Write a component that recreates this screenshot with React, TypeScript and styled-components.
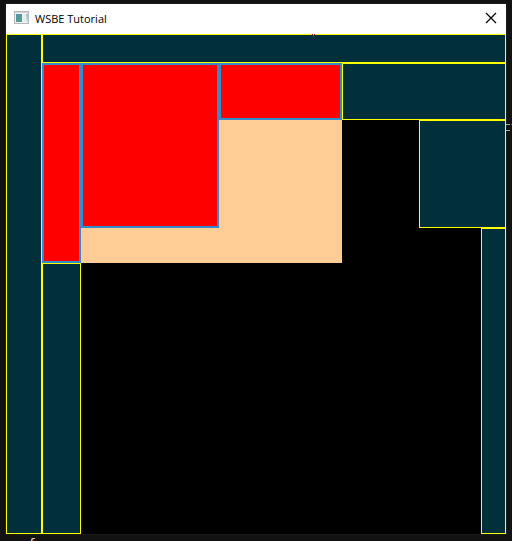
import React from "react";
import styled, { createGlobalStyle } from "styled-components";

const GlobalStyle = createGlobalStyle`
  * { box-sizing: border-box; }
  html, body { margin: 0; background: #121212; }
  body { overflow: hidden; }
`;

const Desktop = styled.div`
  position: relative;
  padding: 4px 6px 0;
  background: #121212;
  font-family: "Open Sans", "Noto Sans", sans-serif;
`;

const Window = styled.main`
  background: #000000;
  box-shadow: 0 0 0 1px #1c1c1c;
`;

const TitleBar = styled.header`
  display: flex;
  align-items: center;
  height: 30px;
  padding: 0 9px 2px 8px;
  background: #ffffff;
  color: #000000;
`;

const Title = styled.h1`
  flex: 1;
  margin: 0 0 0 6px;
  padding-top: 2px;
  font-size: 11px;
  line-height: 16px;
  font-weight: 400;
`;

const CloseButton = styled.button`
  display: flex;
  padding: 0;
  border: 0;
  background: transparent;
  cursor: pointer;
`;

const Canvas = styled.section`
  position: relative;
  display: grid;
  aspect-ratio: 1;
  grid-template-columns: 36fr 39fr 138fr 123fr 77fr 62fr 25fr;
  grid-template-rows: 29fr 57fr 108fr 35fr 271fr;
`;

const Region = styled.div<{ $area: string }>`
  grid-area: ${({ $area }) => $area};
`;

const FreeRegion = styled(Region)`
  border: 1px solid #ffff00;
  background: #02303a;
`;

const PlacedRegion = styled(Region)`
  border: 2px solid #328cce;
  background: #ff0000;
`;

const Bounds = styled(Region)`
  background: #ffcc96;
`;

const Marker = styled.svg`
  position: absolute;
  top: 0;
  left: 61.2%;
`;

const EdgeMarks = styled.svg`
  position: absolute;
  top: 123px;
  right: 0;
`;

const CodeLine = styled.div`
  height: 7px;
  padding: 2px 0 0 22px;
  overflow: hidden;
  color: #e8dcc8;
  font-family: "DejaVu Sans Mono", monospace;
  font-size: 13px;
  line-height: 16px;
`;

const free = [
  "1 / 1 / 6 / 2",
  "1 / 2 / 2 / 8",
  "2 / 5 / 3 / 8",
  "3 / 6 / 4 / 8",
  "4 / 7 / 6 / 8",
  "5 / 2 / 6 / 3",
];

const placed = ["2 / 2 / 5 / 3", "2 / 3 / 4 / 4", "2 / 4 / 3 / 5"];

const AppIcon = () => (
  <svg width="15" height="14" viewBox="0 0 15 14" shapeRendering="crispEdges" aria-hidden="true">
    <defs>
      <linearGradient id="pane" x1="0" y1="0" x2="1" y2="1">
        <stop offset="0" stopColor="#568fb4" />
        <stop offset="1" stopColor="#53a77c" />
      </linearGradient>
      <linearGradient id="side" x1="0" y1="0" x2="0" y2="1">
        <stop offset="0" stopColor="#98bfc5" />
        <stop offset="1" stopColor="#d8e5e1" />
      </linearGradient>
    </defs>
    <rect width="15" height="13" fill="#b4b7bb" />
    <rect x="1" y="1" width="13" height="1" fill="#d4d7da" />
    <rect x="1" y="2" width="13" height="10" fill="#f0f2f3" />
    <rect x="2" y="3" width="6" height="8" fill="url(#pane)" />
    <rect x="9" y="3" width="2" height="8" fill="#e2eeee" />
    <rect x="12" y="3" width="2" height="8" fill="url(#side)" />
  </svg>
);

export default function App() {
  return (
    <Desktop>
      <GlobalStyle />
      <Window>
        <TitleBar>
          <AppIcon />
          <Title>WSBE Tutorial</Title>
          <CloseButton type="button" aria-label="Close">
            <svg width="12" height="12" viewBox="0 0 12 12" aria-hidden="true">
              <path d="M1 1 11 11M11 1 1 11" stroke="#000" strokeWidth="1.2" fill="none" />
            </svg>
          </CloseButton>
        </TitleBar>
        <Canvas>
          <Bounds $area="2 / 3 / 5 / 5" />
          {free.map((area) => <FreeRegion key={area} $area={area} />)}
          {placed.map((area) => <PlacedRegion key={area} $area={area} />)}
          <Marker width="3" height="2" viewBox="0 0 3 2" shapeRendering="crispEdges" aria-hidden="true">
            <path d="M0 0h1v1h-1zM2 0h1v1h-1z" fill="#d8002c" />
            <path d="M1 0h1v1h-1z" fill="#ffffff" />
            <path d="M1 1h1v1h-1z" fill="#b85a70" />
          </Marker>
        </Canvas>
      </Window>
      <EdgeMarks width="6" height="9" viewBox="0 0 6 9" shapeRendering="crispEdges" aria-hidden="true">
        <path d="M0 1h4v1h-4zM0 7h4v1h-4z" fill="#b5aaa0" />
        <path d="M5 1h1v1h-1z" fill="#287299" />
      </EdgeMarks>
      <CodeLine>f</CodeLine>
    </Desktop>
  );
}
